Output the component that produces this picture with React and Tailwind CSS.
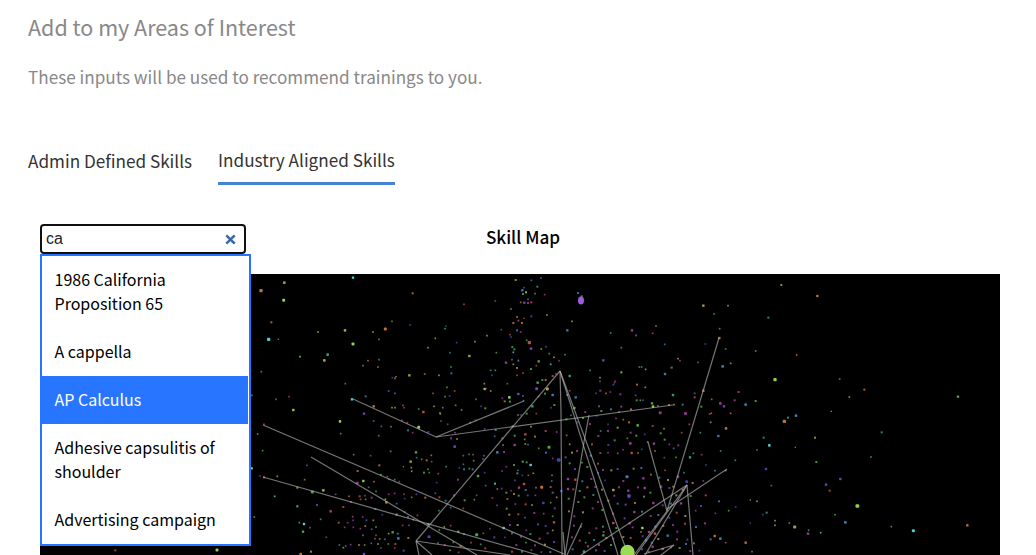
import React from "react";

const COLORS = {
  g: "#4fa83c",
  l: "#93cf4b",
  y: "#b0a03c",
  o: "#bd7238",
  r: "#b84c42",
  p: "#9a3a98",
  v: "#6a44b8",
  n: "#3d46a8",
  b: "#3a7cae",
  t: "#2f9f78",
  c: "#4bd0cc",
};

// Each cluster lists "x,y,colour[,size]" entries in a three-units-per-pixel space.
const CLUSTERS = [
  {
    dx: 630,
    dy: -12,
    dots:
      "103,38,l,7 33,62,o,10 101,91,l,9 64,157,o,6 56,208,c,10 85,208,o,4 309,23,c,7 488,70,o,6 642,103,r,5 736,93,p,5 426,154,g,5 480,165,n,5 588,168,n,5 585,176,g,5 204,186,y,5 285,181,y,8 406,177,o,9 369,186,y,5 387,208,t,5 309,222,l,9 556,205,y,5 620,218,n,5 675,215,y,5 711,197,y,5 534,233,y,5 600,248,b,5 739,248,g,5 658,258,y,7 150,260,g,6 233,254,t,8 223,271,y,8 354,272,o,5 387,269,t,5 339,287,g,5 384,291,o,5 34,305,g,5 603,291,t,5 722,301,t,5 736,301,g,5 478,316,y,7 524,312,o,5 567,316,y,5 604,310,b,6 726,316,n,5 427,323,n,5 435,325,p,6 438,320,y,4 286,341,t,5 703,341,y,5 704,357,l,7 709,355,p,4 722,363,y,5 591,352,g,5 614,363,r,5 416,363,b,5 435,370,b,5 549,370,r,5 599,378,n,5 585,380,g,5 5,376,b,6 78,388,r,5 117,380,p,5 347,379,b,6 306,388,c,7 678,388,t,5 130,420,l,7 371,409,o,7 426,413,y,5 435,413,y,5 459,406,r,5 462,413,p,5 506,417,t,5 520,426,r,7 552,409,y,5 578,413,g,5 570,429,y,5 617,406,o,5 635,420,g,5 693,409,n,5 706,415,g,6 342,431,v,7",
  },
  {
    dx: 630,
    dy: 408,
    dots:
      "270,34,l,8 272,71,g,5 23,72,g,5 38,122,g,5 5,175,l,7 42,43,r,5 371,33,b,5 394,49,b,5 423,50,o,5 386,77,t,5 506,52,l,9 472,38,r,5 456,31,p,5 571,12,g,5 573,33,p,5 520,6,r,6 474,61,b,6 488,68,p,5 535,66,v,5 593,43,p,5 661,38,g,5 677,31,p,5 737,60,t,6 734,79,b,5 704,57,v,5 615,68,p,5 621,87,y,5 603,85,p,6 614,110,v,8 498,127,g,7 422,124,o,5 362,137,p,5 311,134,g,5 388,166,o,6 171,166,v,5 323,183,o,6 393,194,g,5 372,215,o,5 340,213,l,7 322,219,p,8 434,209,t,5 417,208,b,5 412,200,r,5 448,215,p,5 530,151,o,6 545,155,p,5 544,136,o,5 515,148,g,5 482,155,y,7 484,173,y,5 485,184,y,5 500,143,b,5 522,188,g,6 534,178,o,5 538,188,t,5 460,170,g,4 640,137,b,5 657,133,t,5 669,134,r,5 702,137,b,5 699,147,p,5 671,152,g,5 640,163,b,5 628,174,n,5 642,178,b,6 658,176,g,5 668,178,b,6 588,170,t,5 565,191,r,5 742,127,b,8 684,198,g,8 624,209,p,6 704,188,n,5 560,218,n,5 707,227,b,5 735,221,c,6 742,237,o,5 30,198,n,5 82,199,y,5 42,202,o,6 164,209,o,5 142,233,y,6 187,246,g,9 220,241,l,7 257,253,p,5 74,259,c,5 13,321,g,5 142,289,c,6 201,285,v,6 297,259,o,5 242,304,r,7 280,291,r,6 365,263,p,6 378,244,g,5 356,232,b,5 329,259,r,6 345,257,p,5 303,276,p,6 332,268,r,5 347,268,g,5 416,253,p,5 434,250,p,5 462,253,p,5 406,268,l,5 409,277,y,7 440,281,b,5 464,266,n,5 485,262,g,5 499,253,v,5 526,263,o,6 556,250,p,5 568,262,r,6 587,272,b,6 612,256,p,6 644,271,g,6 673,269,g,5 680,256,p,5 727,264,p,5 741,286,p,5 640,295,r,5 602,293,b,5 567,302,t,5 376,297,b,6 338,321,v,5 349,331,n,6 308,320,r,5 309,331,v,5 370,331,y,5 397,314,n,5 440,314,b,7 474,321,v,6 464,306,b,5 266,338,r,6 293,338,p,5 212,328,t,5 148,338,g,5 162,342,c,8 159,365,g,7 180,353,r,5 284,352,p,5 310,352,p,5 331,356,p,5 346,348,y,5 365,358,b,5 378,351,g,5 229,382,p,5 378,376,r,5 339,376,t,5 375,386,r,5 389,387,g,5 405,388,b,5 416,371,y,5 428,367,g,7 443,371,b,6 445,385,b,8 458,346,p,5 477,346,p,5 490,329,g,5 502,316,p,5 535,342,c,6 475,384,o,6 537,380,n,9 568,360,g,5 583,351,y,5 602,347,r,5 625,365,l,6 642,372,b,6 680,374,g,9 700,370,r,5 720,356,p,5 733,382,v,6 268,405,b,5 280,413,y,5 287,408,b,5 302,404,p,5 327,405,r,6 344,405,g,5 364,400,b,5 384,402,y,5 393,414,v,5 415,402,g,5 434,414,p,5 436,402,r,6 461,422,v,6 183,425,y,6 152,432,o,8 342,432,v,7 564,399,b,5 584,405,p,6 610,397,g,5 632,408,o,6 663,398,r,5 692,403,t,5 706,415,r,6 600,421,y,5 626,427,p,5",
  },
  {
    dx: 1380,
    dy: -12,
    dots:
      "47,30,y,6 94,31,b,5 123,24,b,5 112,50,t,6 72,53,v,5 67,61,b,7 78,67,l,6 69,72,g,6 105,71,g,5 134,74,p,5 62,97,o,5 73,98,v,7 84,99,p,6 94,97,r,6 84,88,b,5 33,117,g,5 94,139,n,6 141,135,y,5 51,141,r,6 55,152,p,6 40,159,o,6 66,159,o,6 72,145,o,4 216,154,y,5 202,181,b,7 234,69,b,6 245,79,g,6 4,179,p,5 51,181,b,6 62,186,p,5 30,194,r,5 33,201,n,5 88,218,r,10 80,211,g,5 93,236,v,8 124,237,y,5 138,230,v,5 37,231,t,6 43,238,t,6 40,247,c,5 148,251,g,5 162,262,y,5 195,254,t,5 18,278,p,7 36,269,b,5 55,272,b,6 40,283,y,5 51,294,o,6 69,309,r,5 51,316,r,5 93,297,g,6 109,287,r,5 116,274,g,7 152,283,c,5 177,272,p,5 158,318,r,6 168,312,p,5 209,318,t,7 127,330,t,6 137,330,o,6 113,338,g,7 110,356,v,9 142,357,y,9 22,341,r,5 28,382,l,8 55,372,v,8 7,385,p,5 69,378,n,6 71,392,b,5 14,394,o,6 30,395,g,6 116,379,r,5 135,371,g,6 158,375,b,8 227,382,b,7 209,362,r,5 202,375,b,6 223,414,g,8 97,409,t,7 153,413,n,5 163,405,g,6 256,426,p,6 109,431,p,5 80,431,g,6 332,189,t,5 396,181,p,7 408,196,v,6 458,190,r,5 468,168,g,5 364,233,g,5 310,271,v,7 270,301,t,5 364,307,l,6 300,323,y,5 300,334,p,5 346,334,r,5 340,344,n,6 343,338,p,4 411,344,o,6 436,352,y,5 418,291,t,5 425,291,t,5 437,298,y,5 495,312,b,7 494,223,b,5 515,293,g,6 534,266,y,5 540,272,p,5 288,370,n,5 301,362,p,6 318,370,o,5 331,366,p,5 361,373,p,6 407,376,p,5 519,375,t,7 410,391,g,6 421,391,g,5 429,391,v,5 297,409,p,6 304,423,g,6 333,418,b,6 357,426,o,5 364,410,p,6 393,418,o,6 456,400,g,7 459,410,l,8 474,408,p,6 480,429,p,7 507,405,o,6 548,404,b,6 557,431,p,7 522,404,y,5 610,107,y,7 684,107,y,5 642,132,t,5 659,176,o,5 658,204,o,7 616,222,n,5 677,237,t,5 594,277,r,5 692,280,y,5 668,289,b,8 610,362,o,7 584,370,b,5 584,382,r,6 604,410,g,6 635,388,o,5 661,400,p,8 672,409,v,7 704,391,p,6 716,366,p,6 737,404,b,8 634,430,o,5 692,430,o,5",
  },
  {
    dx: 1380,
    dy: 408,
    dots:
      "7,85,p,6 44,77,g,6 44,105,p,7 76,102,y,5 84,104,b,5 93,50,l,5 105,80,o,6 76,73,r,7 74,88,g,5 38,49,o,6 54,15,o,5 63,15,n,5 137,63,r,6 170,66,p,5 147,112,g,9 116,115,g,5 138,128,b,6 176,150,n,11 158,145,p,5 92,165,c,8 80,157,t,6 68,155,y,6 42,165,g,6 19,170,p,5 9,105,g,5 12,126,p,6 52,190,g,6 6,183,v,5 85,196,r,5 67,196,n,5 54,181,b,5 100,190,y,5 72,222,r,8 45,211,v,5 57,233,p,7 77,240,b,6 108,233,p,6 125,232,o,9 155,213,b,5 156,196,g,5 152,231,r,6 33,242,p,5 5,236,n,6 19,248,g,6 42,252,o,6 56,257,t,6 22,267,r,6 83,256,n,6 106,256,p,5 158,248,b,6 170,262,y,5 184,243,n,8 20,296,g,6 46,282,p,5 77,283,r,6 130,279,n,8 96,285,y,5 152,278,g,5 164,295,v,6 28,314,y,6 55,313,r,6 75,323,b,5 103,309,p,6 131,311,r,5 158,319,g,5 11,354,c,8 53,345,y,6 30,345,p,6 79,361,p,5 114,343,v,6 137,348,n,6 162,337,r,7 158,361,y,5 36,370,b,6 63,380,p,6 91,372,t,6 119,386,r,6 143,370,p,6 15,382,n,5 49,405,p,6 78,398,g,5 105,406,p,6 135,404,y,6 162,396,v,6 36,425,r,6 66,425,t,6 94,420,r,5 124,426,p,5 151,426,b,6 199,28,g,6 213,16,b,5 232,37,n,6 249,24,g,6 270,42,p,6 290,18,n,5 302,63,t,5 324,43,n,5 324,63,p,6 348,25,p,5 353,53,y,6 370,29,o,5 387,37,o,6 413,46,g,8 392,68,p,6 391,100,p,8 409,77,g,6 434,73,n,5 458,48,p,6 481,8,p,7 482,70,g,6 492,56,y,5 545,68,r,5 556,10,p,7 568,43,r,5 601,68,t,5 629,12,r,5 655,78,b,7 678,55,o,8 632,37,y,5 494,89,g,6 508,103,p,5 535,106,p,6 521,115,b,5 462,101,p,7 443,96,g,5 425,118,n,5 382,85,g,5 369,119,p,5 344,91,t,6 325,105,n,6 295,78,p,6 276,103,r,6 209,103,y,5 200,76,o,5 216,128,y,6 197,142,p,6 231,123,p,6 272,137,b,6 301,129,p,6 324,128,p,5 353,130,t,5 395,129,r,7 414,129,o,5 465,123,o,5 493,143,p,5 528,142,g,5 570,142,t,7 580,130,t,5 605,134,p,5 662,123,t,5 706,151,t,5 618,165,n,5 677,182,g,5 617,256,r,6 645,182,t,5 686,302,g,5 209,160,g,6 225,177,v,6 246,158,g,5 262,171,g,6 294,161,r,6 294,189,n,6 309,180,p,6 334,181,y,6 353,177,v,6 381,200,b,9 370,213,p,6 401,176,g,6 424,174,b,6 430,205,p,7 453,194,r,6 478,203,b,6 495,181,r,5 504,210,y,6 534,200,p,7 552,188,t,5 578,219,o,6 610,213,p,5 204,207,p,7 226,209,r,7 247,214,b,6 274,207,p,6 315,211,n,5 204,237,p,7 220,238,r,6 239,243,t,6 262,232,o,6 286,231,v,6 306,239,g,6 340,240,y,8 343,257,p,6 357,232,r,6 385,242,p,7 387,258,v,10 414,232,p,6 434,234,p,7 451,248,g,6 483,230,p,7 508,234,v,6 520,230,o,6 529,256,y,6 548,239,o,6 560,215,n,8 206,266,g,6 235,276,g,6 253,262,g,6 280,255,t,6 294,276,p,6 325,272,o,6 353,281,b,6 377,284,p,6 405,279,o,6 432,260,g,6 460,279,p,7 488,286,v,6 513,281,b,6 543,280,p,7 572,258,g,6 603,288,v,6 657,274,b,6 707,291,n,5 207,304,o,6 223,319,p,6 249,307,y,6 278,295,p,6 307,300,g,6 339,311,p,6 374,325,v,6 403,306,p,7 426,305,t,6 452,318,p,6 475,315,b,6 508,323,n,6 530,308,r,6 556,318,y,6 587,302,p,5 644,378,o,7 661,386,b,8 737,398,o,7 646,310,v,5 677,398,r,5 632,388,b,6 222,347,p,6 243,350,n,6 268,369,r,6 289,355,p,6 309,350,t,6 311,366,r,6 340,339,r,7 349,354,g,6 389,340,p,7 398,352,p,6 427,354,l,8 423,366,o,5 447,366,p,7 465,371,r,8 466,350,b,6 490,348,o,6 519,345,v,6 532,365,p,6 555,341,r,6 588,351,b,6 615,340,p,6 216,382,p,6 239,392,r,6 257,398,g,5 282,390,b,6 297,405,p,6 310,376,t,7 319,384,o,6 340,386,p,6 370,381,o,6 392,384,r,6 428,379,n,6 438,391,v,7 455,398,b,6 475,387,y,6 503,377,b,7 531,388,p,6 562,389,n,6 582,400,o,6 218,418,b,6 252,425,t,8 264,409,r,6 288,421,p,6 314,423,v,6 333,405,g,6 426,418,v,6 446,425,r,6 458,410,p,7 488,417,r,8 513,412,p,6 539,414,g,6 558,402,b,6 571,423,p,6 598,422,n,5",
  },
  {
    dx: 2130,
    dy: -12,
    dots:
      "94,45,y,6 202,78,o,7 55,143,t,6 17,243,g,5 140,255,o,5 75,329,l,10 269,327,t,5 343,359,o,6 298,381,y,5 624,380,g,7 17,393,g,6 244,424,y,4 138,437,b,8 114,443,t,6 103,454,o,10 395,487,t,6 41,503,t,6 195,503,y,6 58,526,c,8 136,532,o,4 21,540,b,5 363,561,t,5 199,576,g,6 48,597,n,7 271,627,v,7 64,647,r,5 228,644,v,7 239,662,r,6 1,690,y,4 21,694,y,5 322,708,l,11 50,728,t,6 39,734,n,5 255,734,g,5 75,752,y,5 75,766,y,5 118,759,t,5 286,757,b,8 134,771,y,9 176,781,t,5 174,791,p,7 212,788,c,5 424,770,o,5 490,782,c,9 652,766,o,7 6,845,o,5 1,759,v,4",
  },
  { dx: -60, dy: 768, dots: "286,61,r,6 591,60,l,9" },
];

// Skill links as [x1, y1, x2, y2] in map pixels.
const LINKS = [
  [313, 125, 396, 163],
  [396, 163, 484, 127],
  [396, 163, 633, 131],
  [520, 97, 376, 267],
  [520, 97, 521, 138],
  [521, 138, 522, 281],
  [520, 97, 578, 281],
  [520, 97, 586, 275],
  [549, 141, 544, 168],
  [544, 168, 525, 281],
  [679, 64, 627, 237],
  [608, 168, 627, 237],
  [687, 195, 627, 235],
  [647, 211, 541, 281],
  [647, 211, 653, 281],
  [647, 211, 596, 281],
  [647, 211, 605, 281],
  [627, 237, 594, 281],
  [634, 271, 604, 280],
  [634, 271, 621, 281],
  [542, 249, 527, 281],
  [223, 151, 524, 280],
  [271, 183, 437, 281],
  [223, 203, 498, 281],
  [376, 267, 470, 281],
  [376, 267, 379, 281],
  [376, 267, 392, 281],
  [523, 258, 525, 281],
];

const OPTIONS = [
  "1986 California Proposition 65",
  "A cappella",
  "AP Calculus",
  "Adhesive capsulitis of shoulder",
  "Advertising campaign",
];

function SkillMap() {
  return (
    <svg className="block h-[281px] w-[960px] bg-black" viewBox="0 0 960 281">
      <g transform="scale(0.33333333)">
        {CLUSTERS.map(({ dx, dy, dots }) => (
          <g key={`${dx}:${dy}`} transform={`translate(${dx} ${dy})`}>
            {dots.split(" ").map((entry, i) => {
              const [x, y, c, s] = entry.split(",");
              const size = Number(s);
              return (
                <rect
                  key={i}
                  x={x - size / 2}
                  y={y - size / 2}
                  width={size}
                  height={size}
                  rx={size > 7 ? 3 : 0}
                  fill={COLORS[c]}
                  fillOpacity={size > 6 ? 1 : 0.85}
                />
              );
            })}
          </g>
        ))}
      </g>
      <g stroke="#b4b4b4" strokeOpacity="0.65" strokeWidth="1.2">
        {LINKS.map(([x1, y1, x2, y2], i) => (
          <line key={i} x1={x1} y1={y1} x2={x2} y2={y2} />
        ))}
      </g>
      <ellipse cx="541" cy="26.5" rx="3" ry="4" fill="#a05ae6" />
      <circle cx="587.5" cy="278" r="7.2" fill="#9bdc55" />
    </svg>
  );
}

function SkillSearch() {
  return (
    <div className="relative w-[206px]">
      <div className="flex h-[30px] items-center rounded border-2 border-[#101010] bg-white pr-2 pl-1">
        <input
          className="w-0 flex-1 font-['Liberation_Sans',sans-serif] text-base leading-5 text-[#222] outline-none"
          defaultValue="ca"
        />
        <svg className="mt-px size-[11px]" viewBox="0 0 11 11">
          <path d="M1.3 1.3l8.4 8.4M9.7 1.3l-8.4 8.4" stroke="#3c66ac" strokeWidth="2.5" />
        </svg>
      </div>
      <ul className="absolute top-[30px] left-0 z-10 w-[211px] border-2 border-[#2575ff] bg-white text-[16px] leading-6 text-black">
        {OPTIONS.map((option) => (
          <li
            key={option}
            className={
              option === "AP Calculus"
                ? "w-[206px] bg-[#2876ff] pt-[11px] pr-5 pb-[13px] pl-[12.5px] text-white"
                : "w-[206px] pt-[11px] pr-5 pb-[13px] pl-[12.5px]"
            }
          >
            {option}
          </li>
        ))}
      </ul>
    </div>
  );
}

export default function App() {
  return (
    <main className="h-[555px] w-[1036px] overflow-hidden bg-white font-['Noto_Sans_CJK_SC',sans-serif]">
      <header className="pt-3 pl-7 text-[#888]">
        <h1 className="text-[21.5px] leading-[30px]">Add to my Areas of Interest</h1>
        <p className="mt-[23px] text-[17.15px] leading-6">
          These inputs will be used to recommend trainings to you.
        </p>
      </header>
      <nav className="mt-[59px] flex h-[37px] gap-[26px] pl-7 text-[17.15px] leading-6 text-[#333]">
        <a className="pt-px">Admin Defined Skills</a>
        <a className="border-b-[3px] border-[#4484d2]">Industry Aligned Skills</a>
      </nav>
      <section className="mt-[39px] pl-10">
        <div className="grid h-[50px] w-[966px] grid-cols-[206px_1fr_206px]">
          <SkillSearch />
          <h2 className="pt-px text-center text-[17.15px] leading-6 font-medium text-black">Skill Map</h2>
        </div>
        <SkillMap />
      </section>
    </main>
  );
}
